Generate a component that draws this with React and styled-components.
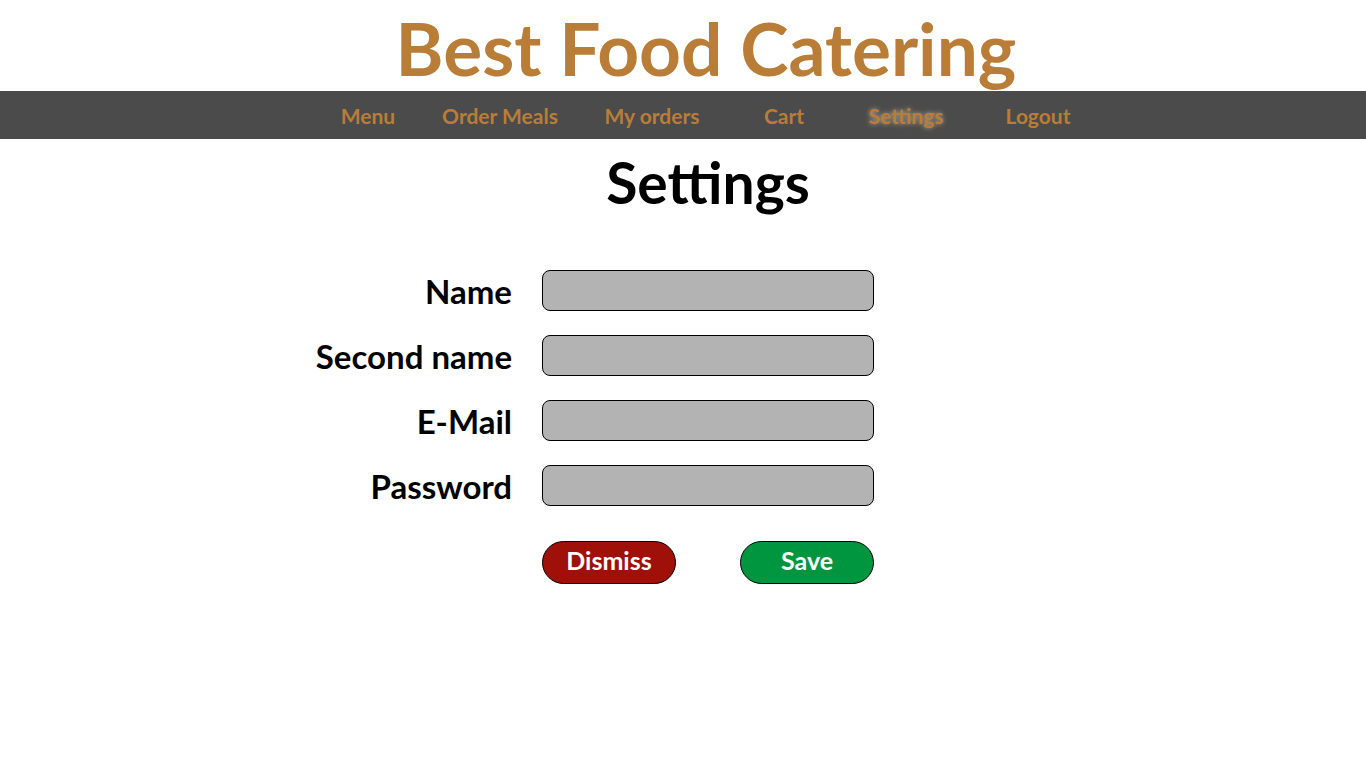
import styled, { createGlobalStyle } from "styled-components";

const GlobalStyle = createGlobalStyle`
  html, body {
    margin: 0;
    padding: 0;
    background: #fff;
  }
  body {
    font-family: "Lato", "Open Sans", sans-serif;
  }
`;

const links = [
  { label: "Menu", w: 100 },
  { label: "Order Meals", w: 164 },
  { label: "My orders", w: 140 },
  { label: "Cart", w: 124 },
  { label: "Settings", w: 120, active: true },
  { label: "Logout", w: 144 },
];

const fields = ["Name", "Second name", "E-Mail", "Password"];

export default function App() {
  return (
    <Page>
      <GlobalStyle />
      <Header>
        <Title>Best Food Catering</Title>
      </Header>
      <Nav>
        <NavList>
          {links.map((l) => (
            <NavLink key={l.label} $w={l.w} $active={l.active} href="#">
              {l.label}
            </NavLink>
          ))}
        </NavList>
      </Nav>
      <Main>
        <Heading>Settings</Heading>
        <Form>
          {fields.map((f) => (
            <Row key={f}>
              <Label>{f}</Label>
              <Input type={f === "Password" ? "password" : "text"} />
            </Row>
          ))}
          <Row>
            <span />
            <Buttons>
              <Button type="button" $bg="#9e1008">
                Dismiss
              </Button>
              <Button type="button" $bg="#009640">
                Save
              </Button>
            </Buttons>
          </Row>
        </Form>
      </Main>
    </Page>
  );
}

const Page = styled.div`
  min-height: 768px;
`;

const Header = styled.header`
  height: 91px;
  display: flex;
  justify-content: center;
  padding-left: 46px;
  overflow: hidden;
`;

const Title = styled.h1`
  margin: 0;
  padding-top: 8px;
  font-size: 73px;
  font-weight: 700;
  line-height: 80px;
  color: #b97d37;
`;

const Nav = styled.nav`
  height: 48px;
  background: #4b4b4b;
  padding-left: 48px;
`;

const NavList = styled.div`
  display: flex;
  justify-content: center;
  height: 100%;
  padding-left: 14px;
`;

const NavLink = styled.a`
  width: ${(p) => p.$w}px;
  display: flex;
  align-items: center;
  justify-content: center;
  font-size: 21px;
  font-weight: 700;
  color: #b97d37;
  text-decoration: none;
  text-shadow: ${(p) =>
    p.$active ? "0 0 5px rgba(255, 235, 205, 0.6)" : "none"};
`;

const Main = styled.main`
  padding-left: 50px;
`;

const Heading = styled.h2`
  margin: 0;
  padding-top: 8px;
  text-align: center;
  font-size: 57px;
  font-weight: 700;
  line-height: 70px;
  color: #000;
`;

const Form = styled.form`
  margin-top: 53px;
  display: flex;
  flex-direction: column;
  gap: 24px;
`;

const Row = styled.div`
  display: grid;
  grid-template-columns: 1fr 332px 1fr;
  align-items: center;
`;

const Label = styled.label`
  padding-right: 30px;
  text-align: right;
  font-size: 33px;
  font-weight: 700;
  line-height: 40px;
  color: #000;
`;

const Input = styled.input`
  box-sizing: border-box;
  width: 332px;
  height: 41px;
  border: 1px solid #000;
  border-radius: 8px;
  background: #b3b3b3;
  outline: none;
`;

const Buttons = styled.div`
  display: flex;
  justify-content: space-between;
  margin-top: 11px;
`;

const Button = styled.button`
  box-sizing: border-box;
  width: 134px;
  height: 43px;
  padding: 0 0 5px;
  border: 1px solid #000;
  border-radius: 22px;
  background: ${(p) => p.$bg};
  color: #fff;
  font-family: "Lato", sans-serif;
  font-size: 25px;
  font-weight: 700;
  cursor: pointer;
`;
